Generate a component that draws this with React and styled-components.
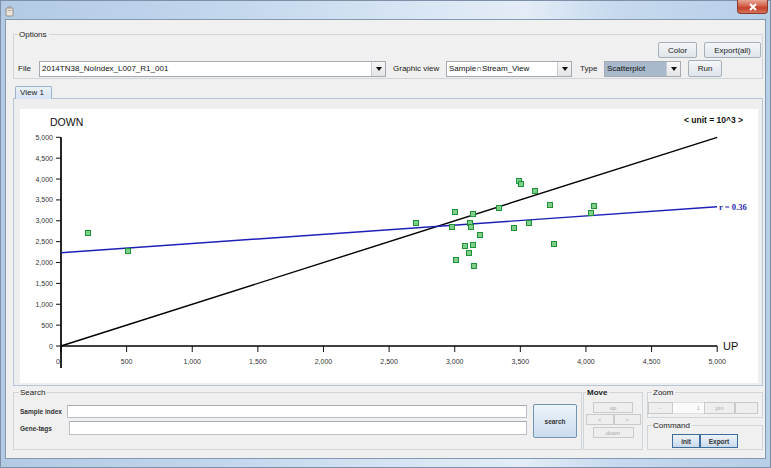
import React from 'react';
import styled, { createGlobalStyle, css } from 'styled-components';

const LINE = '#d0d5da';

const GlobalStyles = createGlobalStyle`
  html, body { margin: 0; padding: 0; background: #b9cfe7; }
  body { font-family: 'Liberation Sans', Arial, sans-serif; font-size: 8px; color: #151515; }
  * { box-sizing: border-box; }
`;

const Frame = styled.div`
  width: 771px;
  height: 468px;
  display: flex;
  flex-direction: column;
  padding: 0 4px 8px 4px;
  border: 1px solid #7d90a7;
  background: linear-gradient(90deg, #b3cae5 0%, #c3d7ed 30%, #d9e6f4 55%, #e4edf7 68%, #c6d9ee 80%, #b7cee8 100%);
`;

const TitleBar = styled.div`
  height: 19px;
  display: flex;
  justify-content: space-between;
  align-items: flex-start;
`;

const AppIcon = styled.div`
  margin: 4px 0 0 0;
  width: 10px;
  height: 12px;
`;

const CloseBtn = styled.div`
  width: 31px;
  height: 14px;
  margin: -1px -2px 0 0;
  border: 1px solid #8a3a2e;
  border-top: none;
  border-radius: 0 0 4px 4px;
  background: linear-gradient(#e7a595 0%, #d4624b 45%, #c2402a 60%, #d8735a 100%);
  display: flex;
  align-items: center;
  justify-content: center;
`;

const Content = styled.div`
  flex: 1;
  display: flex;
  flex-direction: column;
  background: #f0f0f0;
  border: 1px solid #8399b0;
  padding: 10px 2px 8px 7px;
`;

const Group = styled.div`
  display: flex;
  flex-direction: column;
  width: ${p => (p.$w ? `${p.$w}px` : 'auto')};
  flex: ${p => (p.$grow ? 1 : 'none')};
  margin-left: ${p => p.$ml || 0}px;
  margin-top: ${p => p.$mt || 0}px;
`;

const GroupHead = styled.div`
  display: flex;
  height: 10px;
  line-height: 10px;
  font-size: 8px;
  color: #222;
  font-weight: ${p => (p.$bold ? 700 : 400)};
  white-space: nowrap;
  &::before {
    content: '';
    align-self: flex-end;
    width: ${p => p.$lead || 4}px;
    height: 5px;
    border-top: 1px solid ${LINE};
    border-left: 1px solid ${LINE};
    margin-right: 1px;
  }
  &::after {
    content: '';
    flex: 1;
    align-self: flex-end;
    height: 5px;
    border-top: 1px solid ${LINE};
    border-right: 1px solid ${LINE};
    margin-left: 2px;
  }
`;

const GroupBody = styled.div`
  flex: 1;
  border: 1px solid ${LINE};
  border-top: none;
  padding: ${p => p.$pad || '0'};
  display: flex;
  flex-direction: ${p => (p.$col ? 'column' : 'row')};
  align-items: ${p => p.$align || 'stretch'};
`;

const ButtonRow = styled.div`
  display: flex;
  justify-content: flex-end;
  gap: 7px;
  height: 16px;
`;

const FieldRow = styled.div`
  display: flex;
  align-items: center;
  margin-top: 2px;
  height: 17px;
`;

const Label = styled.span`
  width: ${p => p.$w}px;
  margin-left: ${p => p.$ml || 0}px;
  font-size: 8px;
  white-space: nowrap;
  color: #222;
`;

const Button = styled.button`
  font-family: 'Liberation Sans', Arial, sans-serif;
  font-size: 8px;
  color: #222;
  width: ${p => p.$w}px;
  height: ${p => p.$h}px;
  margin-left: ${p => p.$ml || 0}px;
  padding: 0;
  border: 1px solid #a6b0bb;
  border-radius: 2px;
  background: linear-gradient(#f4f6f8, #dfe5eb);
  flex: none;
  ${p => p.$variant === 'blue' && css`
    font-size: 6.5px;
    font-weight: 700;
    color: #333;
    border-color: #7393b3;
    background: linear-gradient(#eef4fa, #c9dcef);
  `}
  ${p => p.$variant === 'dark' && css`
    font-size: 6.5px;
    font-weight: 700;
    color: #333;
    border-color: #3d6d9c;
    border-radius: 0;
    background: linear-gradient(#edf3fa, #c8daed);
  `}
  ${p => p.$variant === 'flat' && css`
    font-size: 6px;
    color: #a8a8a8;
    border-color: #c8cacc;
    border-radius: 0;
    background: #eeeeee;
  `}
`;

const Combo = styled.div`
  width: ${p => p.$w}px;
  height: 16px;
  display: flex;
  border: 1px solid #a3aab2;
  background: #fff;
  flex: none;
`;

const ComboText = styled.div`
  flex: 1;
  padding-left: 2px;
  line-height: 14px;
  font-size: 8px;
  color: #111;
  white-space: nowrap;
  overflow: hidden;
  background: ${p => (p.$hl ? '#a9b9cc' : '#fff')};
`;

const ComboArrow = styled.div`
  width: 14px;
  border-left: 1px solid #c7cdd3;
  background: linear-gradient(#f7f7f7, #e2e4e6);
  display: flex;
  align-items: center;
  justify-content: center;
  &::after {
    content: '';
    border-left: 3px solid transparent;
    border-right: 3px solid transparent;
    border-top: 4px solid #111;
  }
`;

const TabStrip = styled.div`
  display: flex;
  height: 13px;
  margin-top: 7px;
  margin-bottom: -1px;
  padding-left: 2px;
  position: relative;
  z-index: 1;
`;

const Tab = styled.div`
  width: 37px;
  height: 13px;
  padding-left: 4px;
  line-height: 12px;
  font-size: 8px;
  color: #222;
  border: 1px solid #9fb4ca;
  border-bottom: none;
  border-radius: 2px 2px 0 0;
  background: linear-gradient(#eaf1f9, #d6e4f3);
`;

const TabPane = styled.div`
  flex: 1;
  display: flex;
  border: 1px solid #b5c6d8;
  background: #eeeeee;
  padding: 10px 4px 2px 6px;
`;

const ChartBox = styled.div`
  flex: 1;
  background: #fff;
  overflow: hidden;
`;

const BottomRow = styled.div`
  display: flex;
  height: 62px;
  margin-top: 2px;
`;

const SideCol = styled.div`
  flex: 1;
  display: flex;
  flex-direction: column;
  margin-left: 4px;
`;

const SearchFields = styled.div`
  flex: 1;
  display: grid;
  grid-template-columns: 47px 1fr;
  grid-template-rows: 13px 14px;
  row-gap: 3px;
  align-items: center;
  margin-top: 1px;
`;

const SmallBold = styled.span`
  font-size: 6.5px;
  font-weight: 700;
  color: #333;
  white-space: nowrap;
`;

const TextField = styled.div`
  height: 100%;
  margin-left: ${p => p.$ml || 0}px;
  background: #fff;
  border: 1px solid #b9bfc6;
  border-top-color: #a6acb3;
`;

const MoveRow = styled.div`
  display: flex;
  margin-top: ${p => p.$mt || 0}px;
`;

const ZoomField = styled.div`
  width: 31px;
  height: 12px;
  background: #fafafa;
  border-top: 1px solid #e0e0e0;
  border-bottom: 1px solid #e0e0e0;
  font-size: 6px;
  color: #bbb;
  text-align: right;
  padding-right: 4px;
  line-height: 10px;
`;

const X0 = 41;
const Y0 = 237;
const SX = 0.13124;
const SY = 0.04174;
const px = v => X0 + v * SX;
const py = v => Y0 - v * SY;
const TICKS = Array.from({ length: 11 }, (_, i) => i * 500);

const POINTS = [
  [68, 124], [108, 142], [396, 114], [435, 103], [453, 105], [450, 114],
  [432, 118], [451, 118], [460, 126], [445, 137], [453, 136], [449, 144],
  [436, 151], [454, 157], [479, 99], [499, 72], [501, 75], [515, 82],
  [530, 96], [494, 119], [509, 114], [534, 135], [574, 97], [571, 104],
];

function Chart() {
  return (
    <svg width="738" height="272" viewBox="0 0 738 272" fontFamily="'Liberation Sans', Arial, sans-serif">
      <text x="30" y="17" fontSize="10.5" fill="#111">DOWN</text>
      <text x="723" y="14" fontSize="8.5" fontWeight="700" fill="#111" textAnchor="end">&lt; unit = 10^3 &gt;</text>
      {TICKS.map(t => (
        <g key={'y' + t}>
          <line x1={X0 - 5} y1={py(t)} x2={X0} y2={py(t)} stroke="#111" strokeWidth="1" />
          <text x={X0 - 8} y={py(t) + 2.5} fontSize="7" fill="#333" textAnchor="end">{t.toLocaleString('en-US')}</text>
        </g>
      ))}
      {TICKS.map(t => (
        <g key={'x' + t}>
          <line x1={px(t)} y1={Y0} x2={px(t)} y2={Y0 + 6} stroke="#111" strokeWidth="1" />
          <text x={t === 0 ? px(t) - 3 : px(t)} y={Y0 + 18} fontSize="7" fill="#333" textAnchor="middle">{t.toLocaleString('en-US')}</text>
        </g>
      ))}
      <line x1={X0} y1={py(5000)} x2={X0} y2={259} stroke="#000" strokeWidth="1.7" />
      <line x1={X0} y1={Y0} x2={px(5000)} y2={Y0} stroke="#000" strokeWidth="1.7" />
      <text x="703" y="241" fontSize="11" fill="#111">UP</text>
      <line x1={X0} y1={Y0} x2={px(5000)} y2={py(5000)} stroke="#000" strokeWidth="1.4" />
      <line x1={X0} y1={py(2235)} x2={697} y2={py(3337)} stroke="#1c20b8" strokeWidth="1.4" />
      <text x="699" y="100.5" fontSize="8.6" fontWeight="700" fill="#2a2ab0" fontFamily="'Liberation Serif', 'Times New Roman', serif">r = 0.36</text>
      {POINTS.map(([x, y], i) => (
        <rect key={i} x={x - 2.5} y={y - 2.5} width="5" height="5" fill="#7fcf8c" stroke="#1f9238" strokeWidth="1" />
      ))}
    </svg>
  );
}

function App() {
  return (
    <>
      <GlobalStyles />
      <Frame>
        <TitleBar>
          <AppIcon>
            <svg width="10" height="12" viewBox="0 0 10 12">
              <rect x="1" y="3" width="7" height="8" rx="1" fill="#e9e4dc" stroke="#8a7f70" strokeWidth="0.8" />
              <path d="M3 1 Q4 2 3 3 M5 0.5 Q6 1.8 5 3" stroke="#9a8f80" strokeWidth="0.7" fill="none" />
              <rect x="2.5" y="5" width="4" height="1" fill="#b9a98e" />
            </svg>
          </AppIcon>
          <CloseBtn>
            <svg width="10" height="8" viewBox="0 0 10 8">
              <path d="M2 1 L8 7 M8 1 L2 7" stroke="#fff" strokeWidth="2" />
            </svg>
          </CloseBtn>
        </TitleBar>
        <Content>
          <Group>
            <GroupHead>Options</GroupHead>
            <GroupBody $col $pad="2px 1px 1px 4px">
              <ButtonRow>
                <Button $w={39} $h={16}>Color</Button>
                <Button $w={57} $h={16}>Export(all)</Button>
              </ButtonRow>
              <FieldRow>
                <Label $w={21}>File</Label>
                <Combo $w={347}>
                  <ComboText>2014TN38_NoIndex_L007_R1_001</ComboText>
                  <ComboArrow />
                </Combo>
                <Label $w={53} $ml={7}>Graphic view</Label>
                <Combo $w={126}>
                  <ComboText>Sample∩Stream_View</ComboText>
                  <ComboArrow />
                </Combo>
                <Label $w={24} $ml={8}>Type</Label>
                <Combo $w={77}>
                  <ComboText $hl>Scatterplot</ComboText>
                  <ComboArrow />
                </Combo>
                <Button $w={34} $h={17} $ml={7}>Run</Button>
              </FieldRow>
            </GroupBody>
          </Group>

          <TabStrip>
            <Tab>View 1</Tab>
          </TabStrip>
          <TabPane>
            <ChartBox>
              <Chart />
            </ChartBox>
          </TabPane>

          <BottomRow>
            <Group $w={569}>
              <GroupHead $lead={5}>Search</GroupHead>
              <GroupBody $pad="6px 4px 0 6px" $align="flex-start">
                <SearchFields>
                  <SmallBold>Sample index</SmallBold>
                  <TextField />
                  <SmallBold>Gene-tags</SmallBold>
                  <TextField $ml={2} />
                </SearchFields>
                <Button $w={44} $h={34} $ml={6} $variant="blue">search</Button>
              </GroupBody>
            </Group>

            <Group $w={60} $ml={1}>
              <GroupHead $bold $lead={2}>Move</GroupHead>
              <GroupBody $col $align="center" $pad="4px 0 0 0">
                <Button $w={40} $h={11} $variant="flat">up</Button>
                <MoveRow $mt={1}>
                  <Button $w={28} $h={11} $variant="flat">&lt;</Button>
                  <Button $w={27} $h={11} $variant="flat">&gt;</Button>
                </MoveRow>
                <Button $w={41} $h={11} $variant="flat" style={{ marginTop: 2 }}>down</Button>
              </GroupBody>
            </Group>

            <SideCol>
              <Group>
                <GroupHead $lead={0}>Zoom</GroupHead>
                <GroupBody $pad="4px 0 3px 0">
                  <Button $w={25} $h={12} $variant="flat">-</Button>
                  <ZoomField>1</ZoomField>
                  <Button $w={31} $h={12} $variant="flat">pin</Button>
                  <Button $w={23} $h={12} $variant="flat">.</Button>
                </GroupBody>
              </Group>
              <Group $grow $mt={3}>
                <GroupHead $lead={0}>Command</GroupHead>
                <GroupBody $pad="3px 0 0 0" style={{ justifyContent: 'center', alignItems: 'flex-start' }}>
                  <Button $w={28} $h={14} $variant="dark">init</Button>
                  <Button $w={38} $h={14} $variant="dark">Export</Button>
                </GroupBody>
              </Group>
            </SideCol>
          </BottomRow>
        </Content>
      </Frame>
    </>
  );
}

export default App;
